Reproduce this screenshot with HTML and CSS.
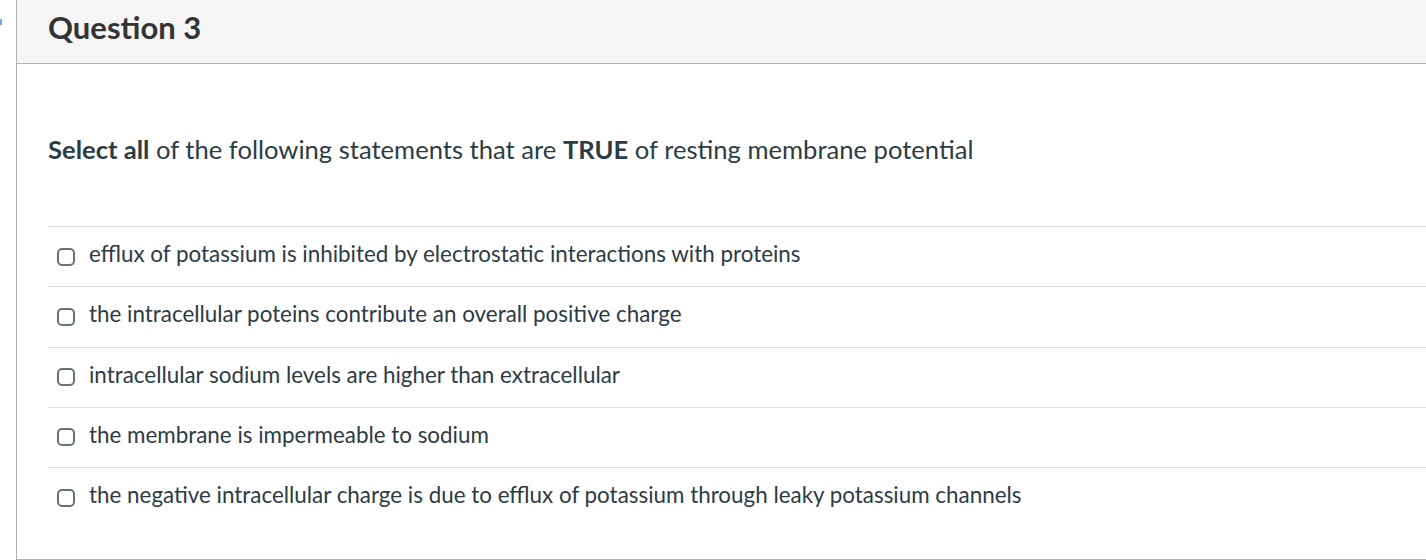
FILE: index.html
```html
<!DOCTYPE html>
<html>
<head>
<meta charset="utf-8">
<link rel="stylesheet" href="styles.css">
</head>
<body>
<span class="edge-dot"></span>
<div class="question">
  <div class="question-header">
    <h2 class="question-title">Question 3</h2>
  </div>
  <div class="question-body">
    <p class="question-text"><strong>Select all</strong> of the following statements that are <strong>TRUE</strong> of resting membrane potential</p>
    <ul class="answers">
      <li class="answer"><span class="box"></span><span class="label">efflux of potassium is inhibited by electrostatic interactions with proteins</span></li>
      <li class="answer"><span class="box"></span><span class="label">the intracellular poteins contribute an overall positive charge</span></li>
      <li class="answer"><span class="box"></span><span class="label">intracellular sodium levels are higher than extracellular</span></li>
      <li class="answer"><span class="box"></span><span class="label">the membrane is impermeable to sodium</span></li>
      <li class="answer"><span class="box"></span><span class="label">the negative intracellular charge is due to efflux of potassium through leaky potassium channels</span></li>
    </ul>
  </div>
</div>
</body>
</html>
```
FILE: styles.css
```css
html, body {
  margin: 0;
  padding: 0;
  overflow: hidden;
  background: #fff;
}
body {
  font-family: Lato, "Open Sans", sans-serif;
  color: #2d3b45;
  position: relative;
  height: 560px;
}
.edge-dot {
  position: absolute;
  left: 0;
  top: 19px;
  width: 2px;
  height: 6px;
  background: #7aa7d6;
}
.question {
  margin-left: 16px;
  width: 1430px;
  height: 560px;
  border-left: 1px solid #aeb3b7;
  border-bottom: 1px solid #aeb3b7;
  box-sizing: border-box;
}
.question-header {
  height: 64px;
  background: #f5f5f5;
  border-bottom: 1px solid #aeb3b7;
  box-sizing: border-box;
  padding-left: 31px;
  display: flex;
  align-items: center;
}
.question-title {
  margin: 0;
  font-size: 31px;
  font-weight: 700;
  color: #333;
  position: relative;
  top: -5px;
}
.question-body {
  padding: 0 0 0 31px;
}
.question-text {
  margin: 0;
  padding-top: 69px;
  font-size: 25.6px;
  line-height: 32px;
  height: 93px;
}
.question-text strong {
  font-weight: 700;
}
.answers {
  list-style: none;
  margin: 0;
  padding: 0;
}
.answer {
  height: 60.25px;
  box-sizing: border-box;
  border-top: 1px solid #dcdfe1;
  display: flex;
  align-items: center;
  padding-left: 9px;
  font-size: 22.4px;
}
.box {
  width: 14px;
  height: 14px;
  border: 2px solid #66727a;
  border-radius: 5px;
  margin-right: 14px;
  flex: none;
}
.label {
  position: relative;
  top: -3px;
}
```
